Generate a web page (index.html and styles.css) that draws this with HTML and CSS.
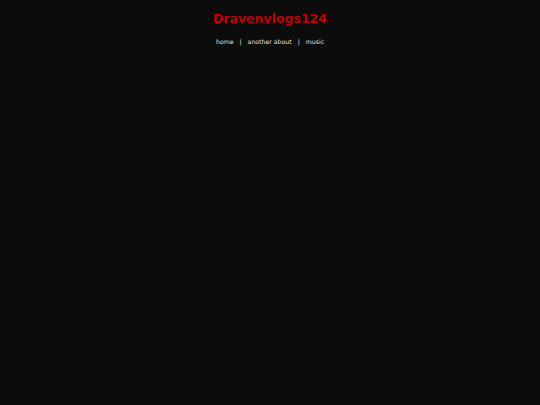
FILE: index.html
```html
<!DOCTYPE html>
<html>
<head>
<meta charset="utf-8">
<link rel="stylesheet" href="styles.css">
</head>
<body>
<header class="header">
  <h1 class="title">Dravenvlogs124</h1>
  <nav class="nav">
    <a href="#" class="nav-link">home</a>
    <span class="sep">|</span>
    <a href="#" class="nav-link">another about</a>
    <span class="sep">|</span>
    <a href="#" class="nav-link">music</a>
  </nav>
</header>
</body>
</html>
```
FILE: styles.css
```css
html, body {
  margin: 0;
  padding: 0;
  background: #0c0c0c;
  height: 100%;
}
body {
  font-family: "Comic Sans MS", "DejaVu Sans", sans-serif;
  color: #e0e0e0;
}
.header {
  display: flex;
  flex-direction: column;
  align-items: center;
  padding-top: 10px;
}
.title {
  margin: 0;
  font-size: 12.5px;
  font-weight: bold;
  color: #c00000;
  line-height: 17px;
}
.nav {
  display: flex;
  gap: 6px;
  margin-top: 10px;
  font-size: 6.2px;
  line-height: 9px;
}
.nav-link {
  color: #e0e0e0;
  text-decoration: none;
}
.sep {
  color: #e0e0e0;
}
```
